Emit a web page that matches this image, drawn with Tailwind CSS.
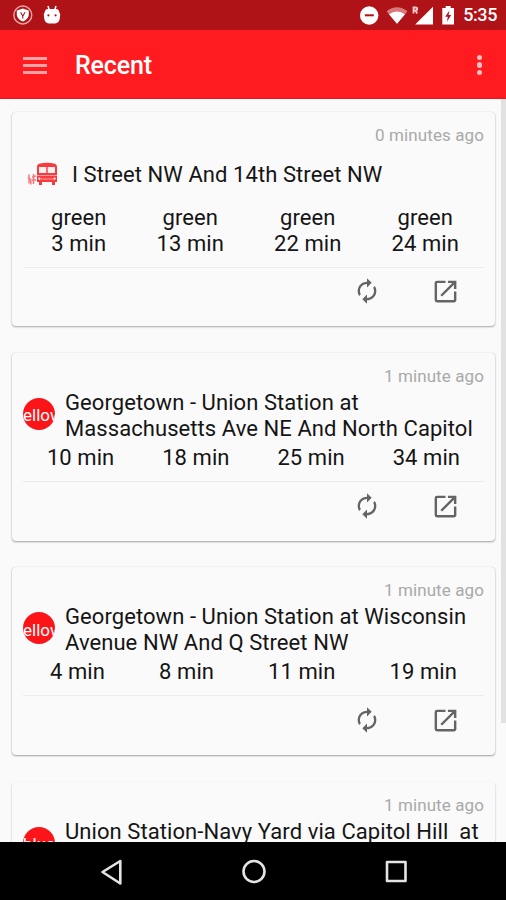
<!DOCTYPE html>
<html lang="en">
<head>
<meta charset="utf-8">
<title>Recent</title>
<script src="https://cdn.jsdelivr.net/npm/@tailwindcss/browser@4"></script>
</head>
<body class="bg-[#fafafa]">
<svg class="hidden">
  <symbol id="refresh" viewBox="0 0 24 24"><path d="M12 6v3l4-4-4-4v3c-4.42 0-8 3.58-8 8 0 1.57.46 3.03 1.24 4.26L6.7 14.8A5.87 5.87 0 0 1 6 12c0-3.31 2.69-6 6-6zm6.76 1.74L17.3 9.2c.44.84.7 1.79.7 2.8 0 3.31-2.69 6-6 6v-3l-4 4 4 4v-3c4.42 0 8-3.58 8-8 0-1.57-.46-3.03-1.24-4.26z"/></symbol>
  <symbol id="open" viewBox="0 0 24 24"><path d="M19 19H5V5h7V3H5a2 2 0 0 0-2 2v14a2 2 0 0 0 2 2h14c1.1 0 2-.9 2-2v-7h-2v7zM14 3v2h3.59l-9.83 9.83 1.41 1.41L19 6.41V10h2V3h-7z"/></symbol>
</svg>
<div class="flex h-[900px] w-[506px] flex-col overflow-hidden bg-[#fafafa] font-['Roboto',sans-serif] text-[22px] leading-[26px] tracking-[0.07px] text-[#151515]">
  <div class="flex h-[30px] shrink-0 items-center bg-[#b01317] pr-[9px] pl-3 text-white">
    <svg class="h-[22px] w-[22px]" viewBox="0 0 22 22"><circle cx="10.8" cy="11" r="9" fill="none" stroke="#f0a5a6" stroke-width="1.4"/><path d="M10.8 4.5 16.8 6.6v3.6c0 3.4-2.6 5.8-6 7.2-3.4-1.4-6-3.8-6-7.2V6.6z" fill="#fff"/><path d="M8.6 8.2l2.2 4 2.2-4M10.8 12v2.5" fill="none" stroke="#b01317" stroke-width="1.1"/></svg>
    <svg class="ml-[9px] h-[20px] w-[18px]" viewBox="0 0 18 20"><path d="M5 1l1.3 4M13 1l-1.3 4" stroke="#fff" stroke-width="1.5"/><path d="M2 6.5Q2 4 5 4h8q3 0 3 2.500Q17.500 8 17 12q-.5 6-5 6.500H6Q1.500 18 1 12 .5 8 2 6.500z" fill="#fff"/><circle cx="5.400" cy="10.300" r="1.100" fill="#b01317"/><circle cx="12.600" cy="10.300" r="1.100" fill="#b01317"/></svg>
    <div class="flex-1"></div>
    <svg class="h-[20px] w-[100px]" viewBox="0 0 100 20"><circle cx="12.200" cy="10.500" r="9.200" fill="#fff"/><path d="M7.800 10.300h9" stroke="#b01317" stroke-width="2"/><path d="M29.500 6.200Q40-1.600 50.500 6.200L40 18.700z" fill="#d9797b"/><path d="M32 9.300Q40 3.500 48 9.300L40 18.700z" fill="#fff"/><path d="M76 1.800v17.700H58.200z" fill="#fff"/><path d="M56.500 8.500V2.500h2q1.700 0 1.700 1.500t-1.700 1.500h-2m2 0 1.700 3" fill="none" stroke="#f0cccc" stroke-width="1.800"/><path d="M88.700 1h5v2h3.300v16.500H85.300V3h3.400z" fill="#fff"/><path d="M92.400 5.500l-4.200 6.300h2.600l-.9 5 4.300-6.700h-2.600z" fill="#b01317"/></svg>
    <span class="ml-[6px] text-[18px] leading-5 font-medium tracking-[-0.4px]">5:35</span>
  </div>
  <header class="flex h-[69px] shrink-0 items-center border-b border-[#e51a1e] bg-[#ff1b20] pt-[2px] pr-[24px] pl-[23px] text-white">
    <div class="flex w-6 flex-col gap-[4px]"><i class="h-[3px] bg-[#ffa4a6]"></i><i class="h-[3px] bg-[#ffa4a6]"></i><i class="h-[3px] bg-[#ffa4a6]"></i></div>
    <h1 class="ml-[28px] flex-1 pt-px text-[25px] leading-8 font-medium tracking-[-0.15px]">Recent</h1>
    <div class="flex flex-col gap-[2px]"><i class="size-[5.300px] rounded-full bg-[#ffc1c2]"></i><i class="size-[5.300px] rounded-full bg-[#ffc1c2]"></i><i class="size-[5.300px] rounded-full bg-[#ffc1c2]"></i></div>
  </header>
  <main class="flex min-h-0 flex-1 items-start justify-between overflow-hidden">
    <div class="ml-3 flex w-[483px] flex-col gap-[26.600px] pt-[13px]">
      <section class="h-[214px] shrink-0 rounded-[4px] bg-[#fafafa] px-[11px] pt-3 shadow-[0_1px_2px_rgba(0,0,0,0.32),0_0_1px_rgba(0,0,0,0.2)]">
        <p class="text-right text-[17px] leading-[22px] tracking-[0.1px] text-[#a9a9a9]">0 minutes ago</p>
        <div class="mt-[15px] flex h-[26px] items-center">
          <svg class="ml-[4px] h-[24px] w-[32px] shrink-0" viewBox="0 0 32 24"><path d="M12 1.700Q20-.3 28 1.700q2 .8 2 3V20H10V4.700q0-2.300 2-3z" fill="#f63c40"/><path d="M12 5h7.300v6H12zM20.700 5H28v6h-7.300z" fill="#fff0f0"/><path d="M10 13.500h20M14 17h12" stroke="#ff9b9d"/><path d="M12 19.500h3V23h-3zM25 19.500h3V23h-3z" fill="#f63c40"/><circle cx="12.500" cy="16.700" r="1.100" fill="#fff"/><circle cx="27.500" cy="16.700" r="1.100" fill="#fff"/><path d="M2 12.500v9M.8 15.500l3 2v5M6.500 12v10M5 15l4-1M5 18h4" fill="none" stroke="#f8777a" stroke-width="1.500"/></svg>
          <h2 class="ml-[13px] pt-[2px] whitespace-nowrap">I Street NW And 14th Street NW</h2>
        </div>
        <div class="mt-[18px] flex justify-around pl-[3px] text-center leading-[26px]"><p>green<br>3 min</p><p>green<br>13 min</p><p>green<br>22 min</p><p>green<br>24 min</p></div>
        <div class="mt-[10px] flex justify-end gap-[50px] border-t border-[#ebebeb] pt-[9px] pr-[24px] text-[#646464]"><svg class="size-[28px] fill-current"><use href="#refresh"/></svg><svg class="size-[29px] fill-current"><use href="#open"/></svg></div>
      </section>
      <section class="h-[188px] shrink-0 rounded-[4px] bg-[#fafafa] px-[11px] pt-3 shadow-[0_1px_2px_rgba(0,0,0,0.35),0_0_1px_rgba(0,0,0,0.2)]">
        <p class="text-right text-[17px] leading-[22px] tracking-[0.1px] text-[#a9a9a9]">1 minute ago</p>
        <div class="mt-[3px] flex items-center">
          <div class="mb-[4px] flex size-8 shrink-0 items-center justify-center overflow-hidden rounded-full bg-[#fb1519] pt-[3px] text-[17px] tracking-[0px] text-white"><span>yellow</span></div>
          <h2 class="ml-[10px] whitespace-nowrap">Georgetown - Union Station at<br>Massachusetts Ave NE And North Capitol</h2>
        </div>
        <div class="mt-[3px] flex justify-around"><p>10 min</p><p>18 min</p><p>25 min</p><p>34 min</p></div>
        <div class="mt-[10px] flex justify-end gap-[50px] border-t border-[#ebebeb] pt-[10px] pr-[24px] text-[#646464]"><svg class="size-[28px] fill-current"><use href="#refresh"/></svg><svg class="size-[29px] fill-current"><use href="#open"/></svg></div>
      </section>
      <section class="h-[188px] shrink-0 rounded-[4px] bg-[#fafafa] px-[11px] pt-3 shadow-[0_1px_2px_rgba(0,0,0,0.35),0_0_1px_rgba(0,0,0,0.2)]">
        <p class="text-right text-[17px] leading-[22px] tracking-[0.1px] text-[#a9a9a9]">1 minute ago</p>
        <div class="mt-[3px] flex items-center">
          <div class="mb-[4px] flex size-8 shrink-0 items-center justify-center overflow-hidden rounded-full bg-[#fb1519] pt-[3px] text-[17px] tracking-[0px] text-white"><span>yellow</span></div>
          <h2 class="ml-[10px] whitespace-nowrap">Georgetown - Union Station at Wisconsin<br>Avenue NW And Q Street NW</h2>
        </div>
        <div class="mt-[3px] flex justify-around"><p>4 min</p><p>8 min</p><p>11 min</p><p>19 min</p></div>
        <div class="mt-[10px] flex justify-end gap-[50px] border-t border-[#ebebeb] pt-[10px] pr-[24px] text-[#646464]"><svg class="size-[28px] fill-current"><use href="#refresh"/></svg><svg class="size-[29px] fill-current"><use href="#open"/></svg></div>
      </section>
      <section class="h-[188px] shrink-0 rounded-[4px] bg-[#fafafa] px-[11px] pt-3 shadow-[0_1px_2px_rgba(0,0,0,0.3)]">
        <p class="text-right text-[17px] leading-[22px] tracking-[0.1px] text-[#a9a9a9]">1 minute ago</p>
        <div class="mt-[3px] flex items-start">
          <div class="mt-[8px] flex size-8 shrink-0 items-center justify-center overflow-hidden rounded-full bg-[#fb1519] pt-[2px] text-[17px] tracking-[0px] text-white"><span>blue</span></div>
          <h2 class="ml-[10px] whitespace-pre">Union Station-Navy Yard via Capitol Hill  at</h2>
        </div>
      </section>
    </div>
    <div class="h-[624px] w-[5px] bg-[#e2e2e2]"></div>
  </main>
  <nav class="flex h-[58px] shrink-0 items-center bg-black">
    <svg class="h-[58px] w-[506px]" viewBox="0 0 506 58" fill="none" stroke="#e4e4e4" stroke-width="2.600" stroke-linejoin="round"><path d="M120.300 19v22.500L102.500 30z"/><circle cx="254" cy="29.500" r="10.500"/><path d="M387 20h18.500v19H387z"/></svg>
  </nav>
</div>
</body>
</html>
